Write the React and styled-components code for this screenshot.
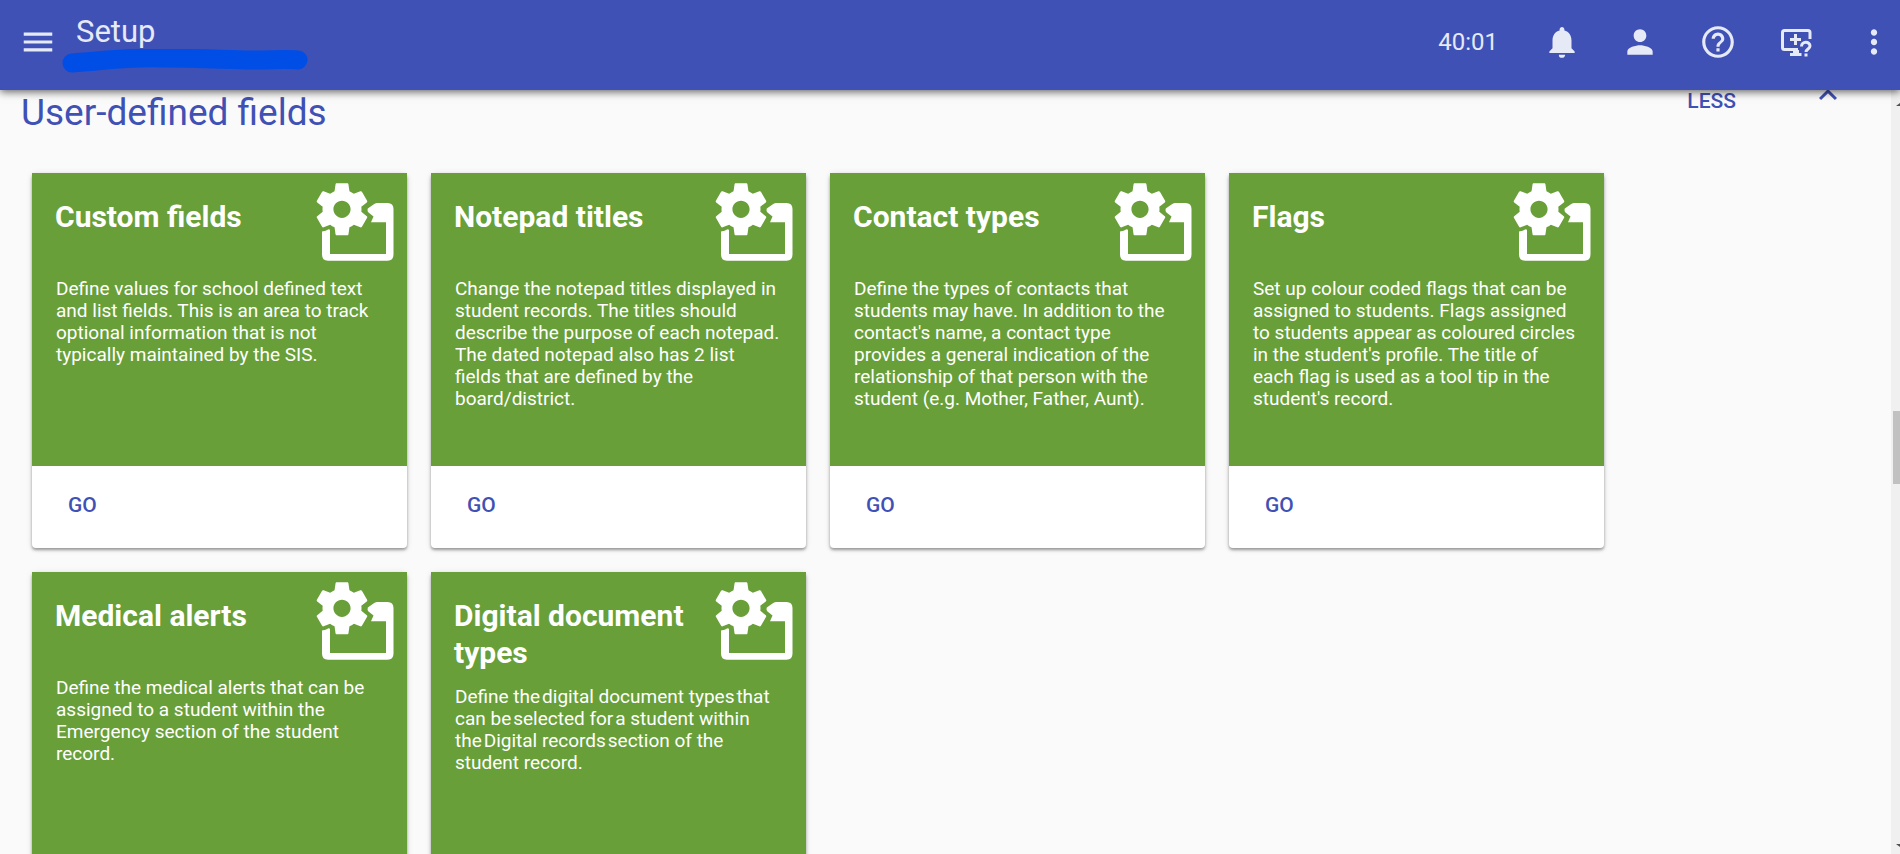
import React from 'react';
import styled, { createGlobalStyle } from 'styled-components';
import {
  MdMenu,
  MdNotifications,
  MdPerson,
  MdHelpOutline,
  MdMoreVert,
  MdExpandLess,
} from 'react-icons/md';

const GlobalStyle = createGlobalStyle`
  *, *::before, *::after { box-sizing: border-box; }
  body {
    margin: 0;
    background: #fafafa;
    font-family: Roboto, "Liberation Sans", sans-serif;
  }
  h1, h2, h3, p { margin: 0; }
  button {
    font-family: inherit;
    border: 0;
    background: none;
    cursor: pointer;
  }
`;

const Page = styled.div`
  display: flex;
  flex-direction: column;
  height: 100vh;
  overflow: hidden;
`;

const Header = styled.header`
  position: relative;
  z-index: 2;
  flex: none;
  display: flex;
  align-items: flex-start;
  height: 90px;
  padding: 0 7px 0 19px;
  background: #3f51b5;
  color: #e6e9f6;
  box-shadow: 0 2px 8px rgba(0, 0, 0, 0.6);
`;

const IconButton = styled.button`
  display: grid;
  place-items: center;
  width: 38px;
  height: 84px;
  padding: 0;
  color: inherit;
  svg {
    display: block;
    width: 38px;
    height: 38px;
  }
`;

const TitleBlock = styled.div`
  display: flex;
  flex-direction: column;
  flex: 1;
  padding: 14px 0 0 4px;
`;

const Title = styled.h1`
  padding-left: 15px;
  font-size: 31px;
  line-height: 35px;
  font-weight: 400;
`;

const Scribble = styled.svg`
  display: block;
  width: 248px;
  height: 26px;
`;

const Actions = styled.div`
  display: flex;
  align-items: center;
  gap: 40px;
  height: 84px;
`;

const Clock = styled.span`
  padding-right: 5px;
  font-size: 24px;
  line-height: 28px;
`;

const Body = styled.div`
  flex: 1;
  display: flex;
  min-height: 0;
`;

const Content = styled.main`
  flex: 1;
  min-width: 0;
  overflow-y: auto;
  scrollbar-width: none;
`;

const SectionHead = styled.div`
  display: flex;
  align-items: flex-start;
  height: 83px;
  padding: 0 45px 0 21px;
  color: #3f51b5;
`;

const SectionTitle = styled.h2`
  flex: 1;
  font-size: 37px;
  line-height: 46px;
  font-weight: 400;
`;

const LessButton = styled.button`
  display: flex;
  align-items: flex-start;
  gap: 74px;
  padding: 0;
  color: #3f51b5;
  font-size: 21px;
  line-height: 22px;
  font-weight: 500;
  svg {
    width: 36px;
    height: 36px;
    margin-top: -13px;
  }
`;

const CardGrid = styled.div`
  display: grid;
  grid-template-columns: repeat(auto-fill, 375px);
  gap: 24px;
  max-width: 1660px;
  padding: 0 32px 24px;
`;

const Card = styled.article`
  display: flex;
  flex-direction: column;
  min-height: 375px;
  border-radius: 4px;
  background: #fff;
  box-shadow: 0 2px 3px rgba(0, 0, 0, 0.35), 0 1px 6px rgba(0, 0, 0, 0.12);
`;

const CardMain = styled.div`
  flex: 1;
  padding-bottom: 24px;
  background: #689f38;
  color: #fff;
`;

const CardHead = styled.div`
  display: flex;
  align-items: flex-start;
  min-height: 90px;
  padding: 9px 11px 0 23px;
`;

const CardTitle = styled.h3`
  flex: 1;
  padding-top: 16px;
  font-size: 30px;
  line-height: 37px;
  font-weight: 700;
`;

const CardIcon = styled.svg`
  flex: none;
  width: 80px;
  height: 80px;
  fill: currentColor;
`;

const CardText = styled.p`
  padding: 15px 24px 0;
  font-size: 19px;
  line-height: 22px;
  font-weight: 400;
  color: #fff;
`;

const CardFooter = styled.div`
  display: flex;
  align-items: center;
  height: 82px;
  padding: 0 16px 4px;
`;

const GoButton = styled.button`
  padding: 8px 20px;
  color: #3f51b5;
  font-size: 21px;
  line-height: 24px;
  font-weight: 500;
`;

const Rail = styled.div`
  flex: none;
  display: flex;
  flex-direction: column;
  align-items: flex-end;
  width: 9px;
  padding: 13px 0 6px;
  background: #f0f0f0;
`;

const RailGap = styled.div`
  flex: ${(p) => p.$grow};
`;

const RailThumb = styled.div`
  flex: 73;
  width: 7px;
  background: #c1c1c1;
`;

const RailArrow = styled.svg`
  flex: none;
  width: 4px;
  height: 4px;
  fill: #505050;
`;

const RemoteHelpIcon = () => (
  <svg viewBox="0 0 38 38" fill="none" stroke="currentColor" aria-hidden="true">
    <path d="M21 26.500H7.500Q5.500 26.500 5.500 24.500V9.500Q5.500 7.500 7.500 7.500H31Q33 7.500 33 9.500V16" strokeWidth="3" />
    <path d="M18.500 11V22M13 16.500H24" strokeWidth="3" />
    <path d="M16 27H22V30H24.500V33H13V30H16Z" fill="currentColor" stroke="none" />
    <path d="M24.500 23.500C24.500 18 33 18 33 23C33 26 29 26 29 29M29 30.500V33.500" strokeWidth="3" />
  </svg>
);

const FolderGearIcon = () => (
  <CardIcon viewBox="0 0 80 80" aria-hidden="true">
    <path
      transform="translate(-5.200 -3.900) scale(2.600)"
      d="M19.43 12.98c.04-.32.07-.64.07-.98s-.03-.66-.07-.98l2.110-1.650c.19-.15.24-.42.12-.64l-2-3.460c-.12-.22-.39-.3-.61-.22l-2.490 1c-.52-.4-1.080-.73-1.690-.98l-.38-2.650C14.460 2.180 14.250 2 14 2h-4c-.25 0-.46.18-.49.42l-.38 2.650c-.61.25-1.170.59-1.690.98l-2.490-1c-.23-.09-.49 0-.61.22l-2 3.460c-.13.22-.07.49.12.64l2.110 1.650c-.04.32-.07.65-.07.98s.03.66.07.98l-2.110 1.650c-.19.15-.24.42-.12.64l2 3.460c.12.22.39.3.61.22l2.490-1c.52.4 1.080.73 1.690.98l.38 2.650c.03.24.24.42.49.42h4c.25 0 .46-.18.49-.42l.38-2.650c.61-.25 1.170-.59 1.690-.98l2.490 1c.23.09.49 0 .61-.22l2-3.460c.12-.22.07-.49-.12-.64l-2.110-1.650zM12 15.300c-1.820 0-3.300-1.480-3.300-3.300s1.480-3.300 3.300-3.300 3.300 1.480 3.300 3.300-1.480 3.300-3.300 3.300z"
    />
    <path d="M6 49.500Q10 49.300 12.500 47.300L14 47.700V72H70V40.300H55L57.500 34.500L52.500 30.500Q51 29.500 51.800 26.500L57.500 22.500Q59 21 61 21H71.500Q77.500 21 77.500 27V72.500Q77.500 78.700 71.500 78.700H12Q6 78.700 6 72.500Z" />
  </CardIcon>
);

const cards = [
  {
    title: 'Custom fields',
    text: 'Define values for school defined text and list fields. This is an area to track optional information that is not typically maintained by the SIS.',
  },
  {
    title: 'Notepad titles',
    text: 'Change the notepad titles displayed in student records. The titles should describe the purpose of each notepad. The dated notepad also has 2 list fields that are defined by the board/district.',
  },
  {
    title: 'Contact types',
    text: "Define the types of contacts that students may have. In addition to the contact's name, a contact type provides a general indication of the relationship of that person with the student (e.g. Mother, Father, Aunt).",
  },
  {
    title: 'Flags',
    text: "Set up colour coded flags that can be assigned to students. Flags assigned to students appear as coloured circles in the student's profile. The title of each flag is used as a tool tip in the student's record.",
  },
  {
    title: 'Medical alerts',
    text: 'Define the medical alerts that can be assigned to a student within the Emergency section of the student record.',
  },
  {
    title: 'Digital document types',
    text: 'Define the\u200adigital document types\u200athat can be\u200aselected for\u200aa student within the\u200aDigital records\u200asection of the student record.',
  },
];

export default function App() {
  return (
    <Page>
      <GlobalStyle />
      <Header>
        <IconButton aria-label="Menu"><MdMenu /></IconButton>
        <TitleBlock>
          <Title>Setup</Title>
          <Scribble viewBox="0 0 248 26" aria-hidden="true">
            <path d="M11 14C50 11 70 8 100 9C140 9 170 11 190 11C212 11 225 10 237 11" fill="none" stroke="#004ee6" strokeWidth="19" strokeLinecap="round" />
          </Scribble>
        </TitleBlock>
        <Actions>
          <Clock>40:01</Clock>
          <IconButton aria-label="Notifications"><MdNotifications /></IconButton>
          <IconButton aria-label="Account"><MdPerson /></IconButton>
          <IconButton aria-label="Help"><MdHelpOutline /></IconButton>
          <IconButton aria-label="Remote support"><RemoteHelpIcon /></IconButton>
          <IconButton aria-label="More"><MdMoreVert /></IconButton>
        </Actions>
      </Header>
      <Body>
        <Content>
          <SectionHead>
            <SectionTitle>User-defined fields</SectionTitle>
            <LessButton>LESS<MdExpandLess /></LessButton>
          </SectionHead>
          <CardGrid>
            {cards.map((card) => (
              <Card key={card.title}>
                <CardMain>
                  <CardHead>
                    <CardTitle>{card.title}</CardTitle>
                    <FolderGearIcon />
                  </CardHead>
                  <CardText>{card.text}</CardText>
                </CardMain>
                <CardFooter>
                  <GoButton>GO</GoButton>
                </CardFooter>
              </Card>
            ))}
          </CardGrid>
        </Content>
        <Rail aria-hidden="true">
          <RailArrow viewBox="0 0 4 4"><path d="M4 0V3H0Z" /></RailArrow>
          <RailGap $grow={304} />
          <RailThumb />
          <RailGap $grow={360} />
          <RailArrow viewBox="0 0 4 4"><path d="M0 0H4V3Z" /></RailArrow>
        </Rail>
      </Body>
    </Page>
  );
}
